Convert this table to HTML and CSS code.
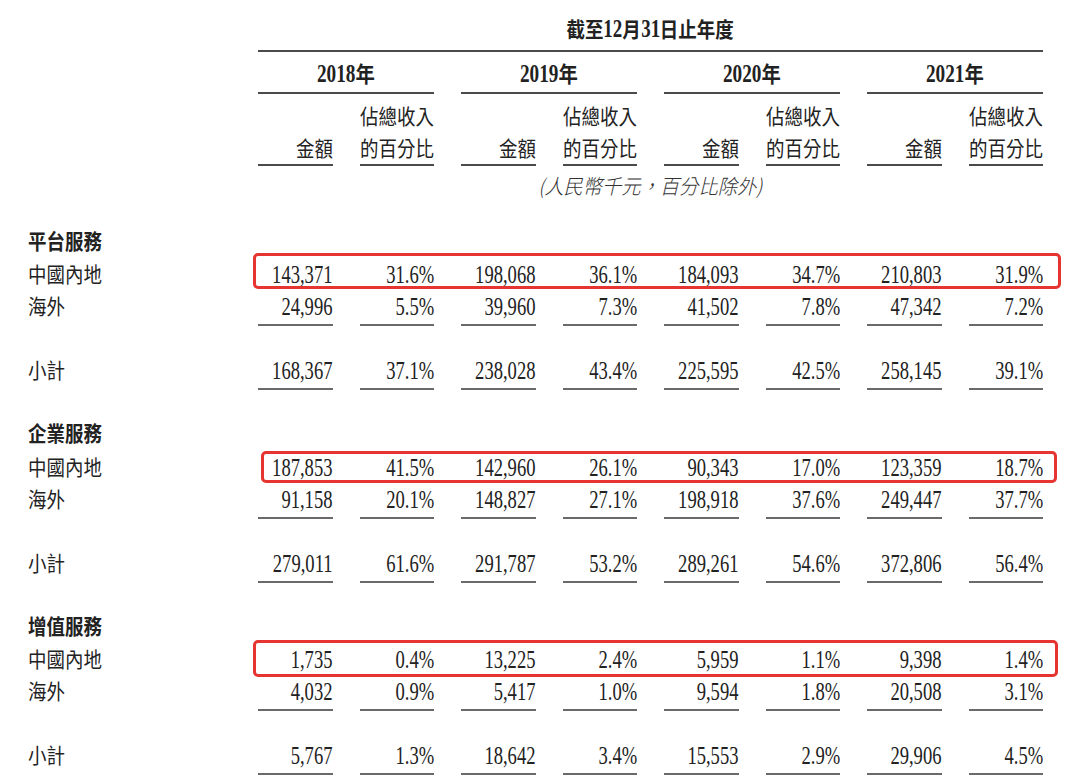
FILE: index.html
```html
<!DOCTYPE html>
<html lang="zh-Hant">
<head>
<meta charset="utf-8">
<title>收入明細</title>
<link rel="stylesheet" href="styles.css">
</head>
<body>
<div class="page">
  <div class="grid head-period">
    <div class="period"><span class="pw">截至<span class="pn">12</span>月<span class="pn">31</span>日止年度</span></div>
  </div>

  <div class="grid head-year">
    <div class="year"><span class="yw"><span class="yn">2018</span>年</span></div>
    <div class="year"><span class="yw"><span class="yn">2019</span>年</span></div>
    <div class="year"><span class="yw"><span class="yn">2020</span>年</span></div>
    <div class="year"><span class="yw"><span class="yn">2021</span>年</span></div>
  </div>

  <div class="grid head-sub">
    <div class="hs hs-first"><span>金額</span></div>
    <div class="hs"><span>佔總收入<br>的百分比</span></div>
    <div class="hs"><span>金額</span></div>
    <div class="hs"><span>佔總收入<br>的百分比</span></div>
    <div class="hs"><span>金額</span></div>
    <div class="hs"><span>佔總收入<br>的百分比</span></div>
    <div class="hs"><span>金額</span></div>
    <div class="hs"><span>佔總收入<br>的百分比</span></div>
  </div>

  <div class="grid head-note">
    <div class="note"><span>(人民幣千元，百分比除外)</span></div>
  </div>

  <section class="sec">
    <div class="sec-title"><span>平台服務</span></div>
    <div class="grid row">
      <div class="lab"><span>中國內地</span></div>
      <div class="c"><span>143,371</span></div><div class="c"><span>31.6%</span></div>
      <div class="c"><span>198,068</span></div><div class="c"><span>36.1%</span></div>
      <div class="c"><span>184,093</span></div><div class="c"><span>34.7%</span></div>
      <div class="c"><span>210,803</span></div><div class="c"><span>31.9%</span></div>
      <div class="hl hl-1"></div>
    </div>
    <div class="grid row ul">
      <div class="lab"><span>海外</span></div>
      <div class="c"><span>24,996</span></div><div class="c"><span>5.5%</span></div>
      <div class="c"><span>39,960</span></div><div class="c"><span>7.3%</span></div>
      <div class="c"><span>41,502</span></div><div class="c"><span>7.8%</span></div>
      <div class="c"><span>47,342</span></div><div class="c"><span>7.2%</span></div>
    </div>
    <div class="grid row ul sub">
      <div class="lab"><span>小計</span></div>
      <div class="c"><span>168,367</span></div><div class="c"><span>37.1%</span></div>
      <div class="c"><span>238,028</span></div><div class="c"><span>43.4%</span></div>
      <div class="c"><span>225,595</span></div><div class="c"><span>42.5%</span></div>
      <div class="c"><span>258,145</span></div><div class="c"><span>39.1%</span></div>
    </div>
  </section>

  <section class="sec">
    <div class="sec-title"><span>企業服務</span></div>
    <div class="grid row">
      <div class="lab"><span>中國內地</span></div>
      <div class="c"><span>187,853</span></div><div class="c"><span>41.5%</span></div>
      <div class="c"><span>142,960</span></div><div class="c"><span>26.1%</span></div>
      <div class="c"><span>90,343</span></div><div class="c"><span>17.0%</span></div>
      <div class="c"><span>123,359</span></div><div class="c"><span>18.7%</span></div>
      <div class="hl hl-2"></div>
    </div>
    <div class="grid row ul">
      <div class="lab"><span>海外</span></div>
      <div class="c"><span>91,158</span></div><div class="c"><span>20.1%</span></div>
      <div class="c"><span>148,827</span></div><div class="c"><span>27.1%</span></div>
      <div class="c"><span>198,918</span></div><div class="c"><span>37.6%</span></div>
      <div class="c"><span>249,447</span></div><div class="c"><span>37.7%</span></div>
    </div>
    <div class="grid row ul sub">
      <div class="lab"><span>小計</span></div>
      <div class="c"><span>279,011</span></div><div class="c"><span>61.6%</span></div>
      <div class="c"><span>291,787</span></div><div class="c"><span>53.2%</span></div>
      <div class="c"><span>289,261</span></div><div class="c"><span>54.6%</span></div>
      <div class="c"><span>372,806</span></div><div class="c"><span>56.4%</span></div>
    </div>
  </section>

  <section class="sec">
    <div class="sec-title"><span>增值服務</span></div>
    <div class="grid row">
      <div class="lab"><span>中國內地</span></div>
      <div class="c"><span>1,735</span></div><div class="c"><span>0.4%</span></div>
      <div class="c"><span>13,225</span></div><div class="c"><span>2.4%</span></div>
      <div class="c"><span>5,959</span></div><div class="c"><span>1.1%</span></div>
      <div class="c"><span>9,398</span></div><div class="c"><span>1.4%</span></div>
      <div class="hl hl-3"></div>
    </div>
    <div class="grid row ul">
      <div class="lab"><span>海外</span></div>
      <div class="c"><span>4,032</span></div><div class="c"><span>0.9%</span></div>
      <div class="c"><span>5,417</span></div><div class="c"><span>1.0%</span></div>
      <div class="c"><span>9,594</span></div><div class="c"><span>1.8%</span></div>
      <div class="c"><span>20,508</span></div><div class="c"><span>3.1%</span></div>
    </div>
    <div class="grid row ul sub">
      <div class="lab"><span>小計</span></div>
      <div class="c"><span>5,767</span></div><div class="c"><span>1.3%</span></div>
      <div class="c"><span>18,642</span></div><div class="c"><span>3.4%</span></div>
      <div class="c"><span>15,553</span></div><div class="c"><span>2.9%</span></div>
      <div class="c"><span>29,906</span></div><div class="c"><span>4.5%</span></div>
    </div>
  </section>
</div>
</body>
</html>
```

FILE: styles.css
```css
html, body {
  margin: 0;
  padding: 0;
  background: #ffffff;
}

body {
  color: #222222;
  font-family: "Noto Sans CJK TC", "Noto Sans CJK SC", sans-serif;
  width: 1080px;
  height: 783px;
  overflow: hidden;
}

.page {
  padding-top: 15.4px;
}

.grid {
  display: grid;
  grid-template-columns: 231px repeat(8, 74.5px);
  column-gap: 27px;
}

/* ---------- header: period ---------- */
.period {
  grid-column: 2 / -1;
  text-align: center;
  font: 700 21px/26px "Noto Sans CJK TC", sans-serif;
  padding-bottom: 8px;
  border-bottom: 2px solid #4a4a4a;
}

.pw {
  display: inline-block;
  white-space: nowrap;
  transform: scaleX(0.88);
  transform-origin: center;
}

.pn {
  display: inline-block;
  width: 21.6px;
  font: 700 26px/26px "Liberation Serif", serif;
  white-space: nowrap;
  transform: scaleX(0.83);
  transform-origin: left center;
}

/* ---------- header: years ---------- */
.head-year {
  margin-top: 6.6px;
}

.year {
  grid-column: span 2;
  text-align: center;
  font: 700 22px/26px "Noto Sans CJK TC", sans-serif;
  padding-bottom: 5.4px;
  border-bottom: 2px solid #4a4a4a;
}

.year:first-child {
  grid-column: 2 / span 2;
}

.yw {
  display: inline-block;
  white-space: nowrap;
  transform: scaleX(0.88);
  transform-origin: center;
}

.yn {
  display: inline-block;
  width: 43.7px;
  font: 700 26px/26px "Liberation Serif", serif;
  white-space: nowrap;
  transform: scaleX(0.84);
  transform-origin: left center;
}

/* ---------- header: sub columns ---------- */
.head-sub {
  margin-top: 4.2px;
  align-items: end;
}

.hs {
  display: flex;
  justify-content: flex-end;
  text-align: right;
  font: 400 21px/32px "Noto Sans CJK TC", sans-serif;
  padding-bottom: 1.6px;
  border-bottom: 2px solid #4a4a4a;
}

.hs-first {
  grid-column: 2;
}

.hs span {
  flex: none;
  display: block;
  white-space: nowrap;
  transform: scaleX(0.88);
  transform-origin: right center;
}

/* ---------- header: note ---------- */
.head-note {
  margin-top: 5.4px;
  margin-bottom: 2px;
}

.note {
  grid-column: 2 / -1;
  text-align: center;
  font: italic 300 20.5px/26px "Noto Sans CJK TC", sans-serif;
  color: #333333;
}

.note span {
  display: inline-block;
  white-space: nowrap;
  transform: scaleX(0.94);
  transform-origin: center;
}

/* ---------- body sections ---------- */
.sec {
  margin-top: 29px;
}

.sec-title {
  padding-left: 28px;
  font: 700 21px/26px "Noto Sans CJK TC", sans-serif;
  margin-bottom: 9.5px;
}

.sec-title span,
.lab span {
  display: inline-block;
  white-space: nowrap;
  transform: scaleX(0.88);
  transform-origin: left center;
}

.row {
  position: relative;
}

.row.sub {
  margin-top: 32px;
}

.lab {
  padding-left: 28px;
  font: 400 21px/22px "Noto Sans CJK TC", sans-serif;
}

.c {
  display: flex;
  justify-content: flex-end;
  font: 400 26px/26px "Liberation Serif", serif;
  padding-bottom: 4px;
  border-bottom: 2px solid transparent;
}

.c span {
  flex: none;
  display: block;
  white-space: nowrap;
  transform: scaleX(0.715);
  transform-origin: right center;
}

.ul .c {
  border-bottom-color: #6a6a6a;
}

/* ---------- red highlight boxes (annotation overlay) ---------- */
.hl {
  position: absolute;
  box-sizing: border-box;
  border: 3px solid #e63430;
  border-radius: 5px;
  pointer-events: none;
}

.hl-1 {
  left: 253px;
  width: 808px;
  top: -9.2px;
  height: 36.6px;
}

.hl-2 {
  left: 261px;
  width: 796px;
  top: -4px;
  height: 32px;
}

.hl-3 {
  left: 253px;
  width: 805px;
  top: -6.6px;
  height: 36.7px;
}
```
